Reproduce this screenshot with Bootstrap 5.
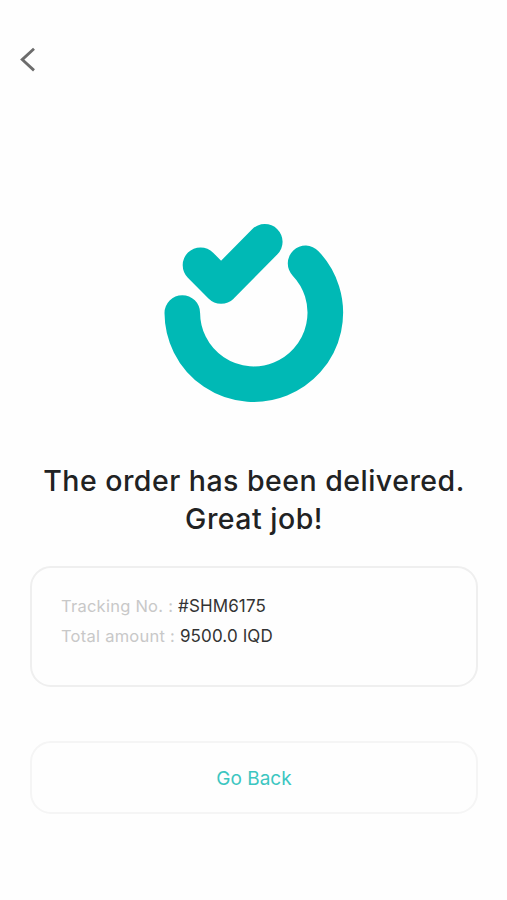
<!DOCTYPE html>
<html lang="en">
<head>
<meta charset="utf-8">
<meta name="viewport" content="width=device-width, initial-scale=1">
<title>Order delivered</title>
<link href="https://cdn.jsdelivr.net/npm/bootstrap@5.3.0/dist/css/bootstrap.min.css" rel="stylesheet">
<style>
  body { font-family: Inter, "Liberation Sans", sans-serif; background: #fefefe; }
  .screen { height: 900px; padding: 46px 29px 0 30px; }
  .back-btn { margin-left: -16px; width: 28px; height: 28px; }
  .status-logo { margin-top: 146px; width: 188px; height: 188px; }
  .headline { margin: 54px -20px 0; font-size: 28.5px; line-height: 38px; font-weight: 500; letter-spacing: .48px; color: #212223; }
  .order-card { margin-top: 28px; height: 121px; border: 2px solid #efefef; border-radius: 21px; padding: 23px 29px; font-size: 17px; line-height: 30px; letter-spacing: .12px; color: #333; background: #fefefe; }
  .order-label { color: #c8c8c8; font-size: 16.5px; letter-spacing: .25px; }
  .go-back { margin-top: 54px; height: 73px; border: 2px solid #f5f5f5; border-radius: 21px; padding-top: 9px; font-size: 19px; color: #3cc6c1; background: #fefefe; }
</style>
</head>
<body>
<main class="screen d-flex flex-column">
  <button class="back-btn btn p-0 border-0 d-flex" aria-label="Back">
    <svg width="28" height="28" viewBox="14 46 28 28" fill="none" stroke="#6c6c6c" stroke-width="2.8"><path d="M34 48.8 22.2 59.6 34 70.4"/></svg>
  </button>
  <svg class="status-logo align-self-center" viewBox="160.2 220 188 188" fill="none" stroke="#00b9b5" stroke-width="35.6" stroke-linecap="round" stroke-linejoin="round" aria-hidden="true">
    <path d="M182.5 313A71.5 71.5 0 1 0 305.8 263.4"/>
    <path d="M200.7 265.2 221.3 286 265 241.8"/>
  </svg>
  <h1 class="headline text-center">The order has been delivered.<br>Great job!</h1>
  <section class="order-card">
    <div><span class="order-label">Tracking No. :</span> #SHM6175</div>
    <div><span class="order-label">Total amount :</span> 9500.0 IQD</div>
  </section>
  <button class="go-back btn w-100">Go Back</button>
</main>
<script src="https://cdn.jsdelivr.net/npm/bootstrap@5.3.0/dist/js/bootstrap.bundle.min.js"></script>
</body>
</html>
